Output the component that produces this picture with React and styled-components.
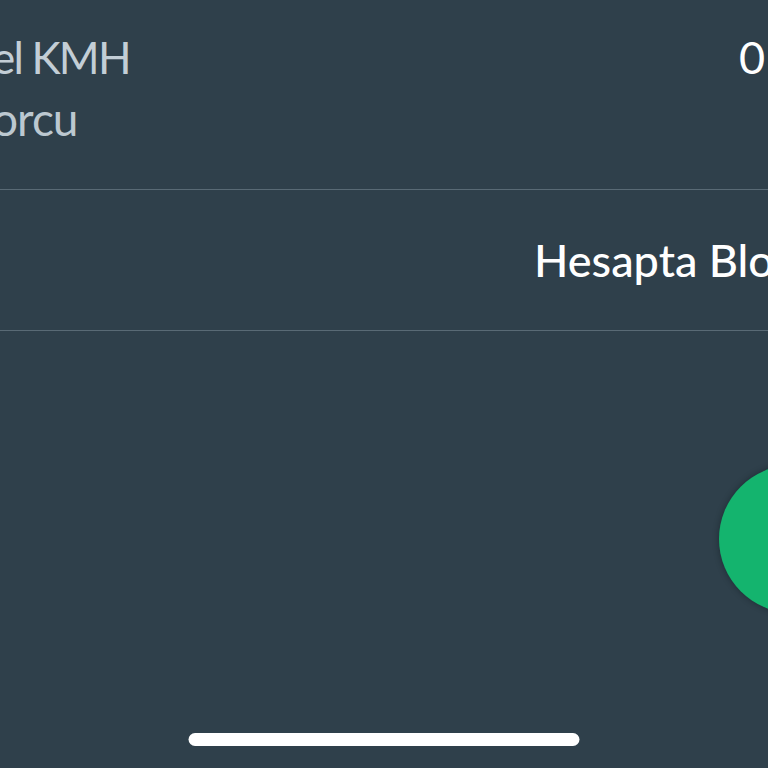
import React from "react";
import styled, { createGlobalStyle } from "styled-components";

const GlobalStyle = createGlobalStyle`
  html, body {
    margin: 0;
    padding: 0;
    background: #2f404b;
  }
  body {
    font-family: Lato, "Noto Sans", sans-serif;
  }
`;

const Viewport = styled.div`
  position: relative;
  width: 768px;
  height: 768px;
  overflow: hidden;
  background: #2f404b;
`;

const List = styled.div`
  display: flex;
  flex-direction: column;
`;

const Row = styled.div`
  display: grid;
  grid-template-columns: ${(props) => props.columns || "1fr auto"};
  align-items: ${(props) => props.align || "start"};
  box-sizing: border-box;
  height: ${(props) => props.height};
  padding: ${(props) => props.pad || "0"};
  border-bottom: 1px solid #596a75;
  white-space: nowrap;
`;

const Labels = styled.div`
  display: flex;
  flex-direction: column;
  margin-left: -8px;
`;

const Title = styled.span`
  font-size: ${(props) => props.size || "44px"};
  line-height: 61px;
  font-weight: 400;
  letter-spacing: ${(props) => props.spacing || "-1.8px"};
  color: #c3ced6;
`;

const Subtitle = styled(Title)`
  color: #bcc8d0;
`;

const Value = styled.span`
  font-size: ${(props) => props.size || "45px"};
  line-height: ${(props) => props.lh || "61px"};
  font-weight: ${(props) => props.weight || 400};
  color: #ffffff;
`;

const Fab = styled.button`
  position: absolute;
  top: 465px;
  right: -99px;
  width: 148px;
  height: 148px;
  border: none;
  border-radius: 50%;
  background: #14b46e;
  box-shadow: 0 0 6px rgba(10, 20, 25, 0.45);
  cursor: pointer;
`;

const HomeIndicator = styled.div`
  position: absolute;
  left: 50%;
  bottom: 22px;
  transform: translateX(-50%);
  width: 391px;
  height: 13px;
  border-radius: 7px;
  background: #ffffff;
`;

const App = () => {
  return (
    <>
      <GlobalStyle />
      <Viewport>
        <List>
          <Row columns="739px 1fr" pad="27px 0 40px" height="190px">
            <Labels>
              <Title>el KMH</Title>
              <Subtitle size="46px" spacing="-1px">orcu</Subtitle>
            </Labels>
            <Value size="45px">0</Value>
          </Row>
          <Row columns="534px 1fr" align="center" height="141px">
            <span />
            <Value size="45px" lh="54px" weight={500}>
              Hesapta Blo
            </Value>
          </Row>
        </List>
        <Fab aria-label="İşlem" />
        <HomeIndicator />
      </Viewport>
    </>
  );
};

export default App;
